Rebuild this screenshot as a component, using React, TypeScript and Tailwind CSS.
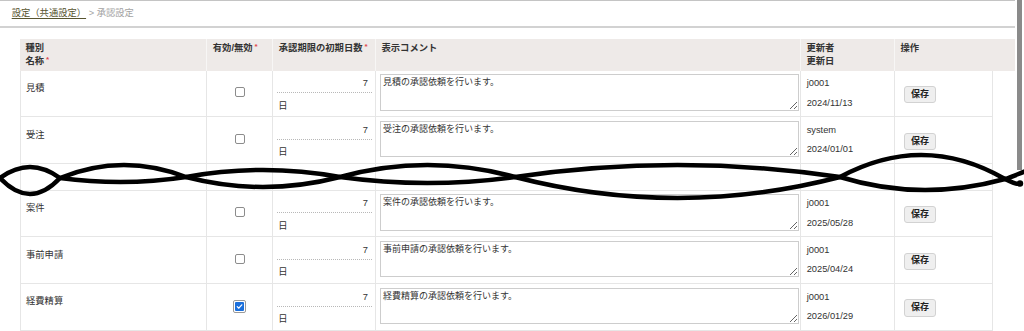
import React from "react";

const FONT = { fontFamily: '"Liberation Sans", "Noto Sans CJK JP", sans-serif' };

type Row = { name: string; checked: boolean; user: string; date: string };

const rowsTop: Row[] = [
  { name: "見積", checked: false, user: "j0001", date: "2024/11/13" },
  { name: "受注", checked: false, user: "system", date: "2024/01/01" },
];
const rowsBottom: Row[] = [
  { name: "案件", checked: false, user: "j0001", date: "2025/05/28" },
  { name: "事前申請", checked: false, user: "j0001", date: "2025/04/24" },
  { name: "経費精算", checked: true, user: "j0001", date: "2026/01/29" },
];

const GRID = "grid grid-cols-[187.3px_66px_102.7px_425px_94px_97.7px]";

function Req() {
  return <span className="relative top-[-2px] ml-[2px] text-[8px] text-[#e0474c]">*</span>;
}

function Checkbox({ checked }: { checked: boolean }) {
  if (checked) {
    return (
      <span className="flex h-[13px] w-[13px] items-center justify-center rounded-[2px] border border-[#9a9a9a] bg-white">
        <span className="flex h-[9px] w-[9px] items-center justify-center rounded-[1px] bg-[#1a6fdc]">
          <svg width="7" height="7" viewBox="0 0 10 10">
            <path d="M1.8 5.2 L4 7.4 L8.3 2.6" fill="none" stroke="#fff" strokeWidth="1.8" strokeLinecap="round" strokeLinejoin="round" />
          </svg>
        </span>
      </span>
    );
  }
  return <span className="block h-[10px] w-[10px] rounded-[2px] border border-[#8c8c8c] bg-white" />;
}

function DataRow({ r }: { r: Row }) {
  const cell = "border-r border-b border-[#e6e6e6] h-[46.7px]";
  return (
    <div className={GRID}>
      <div className={`${cell} border-l pl-[5px] pt-[10.5px] leading-[14px]`}>{r.name}</div>
      <div className={`${cell} flex justify-center pt-[16.5px]`}>
        <Checkbox checked={r.checked} />
      </div>
      <div className={`${cell} pl-[3.4px] pr-[3px] pt-[3.6px]`}>
        <div className="flex h-[19px] items-center justify-end border-b border-dotted border-[#b8b8b8] pr-[4px] leading-[14px]">
          7
        </div>
        <div className="mt-[5.5px] pl-[1.5px] leading-[14px]">日</div>
      </div>
      <div className={`${cell} pl-[4px] pt-[3.6px]`}>
        <textarea
          readOnly
          defaultValue={`${r.name}の承認依頼を行います。`}
          style={FONT}
          className="block h-[36.4px] w-[419px] border border-[#cdcdcd] bg-white px-[2px] py-[1px] text-[9px] leading-[12px] text-[#333] outline-none"
        />
      </div>
      <div className={`${cell} pl-[5.7px]`}>
        <div className="pt-[6.6px] leading-[12px]">{r.user}</div>
        <div className="mt-[7.4px] leading-[12px]">{r.date}</div>
      </div>
      <div className={`${cell} pl-[9.3px] pt-[15.3px]`}>
        <div className="flex h-[17.3px] w-[31.7px] items-center justify-center rounded-[3px] border border-[#d2d2d2] bg-[#efefef] text-[9px] font-bold text-[#222]">
          保存
        </div>
      </div>
    </div>
  );
}

function SpacerRow() {
  const cell = "border-r border-b border-[#e6e6e6] h-[26.5px]";
  return (
    <div className={GRID}>
      <div className={`${cell} border-l`} />
      <div className={cell} />
      <div className={cell} />
      <div className={cell} />
      <div className={cell} />
      <div className={cell} />
    </div>
  );
}

function Header() {
  const cell = "border-r border-[#f7f6f5] h-[31.4px] pl-[5.5px] pt-[2.7px] leading-[12.7px] font-bold";
  return (
    <div className={`${GRID} bg-[#eeeae8] text-[#333]`}>
      <div className={cell}>
        <div>種別</div>
        <div>
          名称
          <Req />
        </div>
      </div>
      <div className={cell}>
        有効/無効
        <Req />
      </div>
      <div className={cell}>
        承認期限の初期日数
        <Req />
      </div>
      <div className={cell}>表示コメント</div>
      <div className={cell}>
        <div>更新者</div>
        <div>更新日</div>
      </div>
      <div className={`${cell} border-r-0`}>操作</div>
    </div>
  );
}

function Wave() {
  const p1 =
    "M0,178 C20,163.3 40,163.3 60,178 C102,183.5 144,183.5 186,177 C237.3,167.7 288.7,167.7 340,177 C398.3,185 456.7,185 515,177 C623.3,161 731.7,161 840,177 C895,194 950,194 1005,179 C1012,177 1018,174 1026,171";
  const p2 =
    "M0,178 C20,199.3 40,199.3 60,178 C102,160.8 144,160.8 186,177 C237.3,190.3 288.7,190.3 340,177 C398.3,161 456.7,161 515,177 C623.3,205 731.7,205 840,177 C895,147.3 950,147.3 1005,179 C1011,182 1015,184 1019,184";
  return (
    <svg className="pointer-events-none absolute left-0 top-0" width="1024" height="331" viewBox="0 0 1024 331">
      <path d={p1} fill="none" stroke="#000" strokeWidth="4.5" strokeLinecap="round" />
      <path d={p2} fill="none" stroke="#000" strokeWidth="4.5" strokeLinecap="round" />
      <circle cx="1020" cy="183.5" r="3.2" fill="#000" />
    </svg>
  );
}

export default function App() {
  return (
    <div className="relative h-[331px] w-[1024px] overflow-hidden bg-white text-[9.3px] text-[#333]" style={FONT}>
      <div className="flex">
        <div className="w-[1015px]">
          <div className="flex h-[28px] items-center border-t-[1.5px] border-b-2 border-t-[#c4c4c4] border-b-[#d2d2d2] pl-[11.7px]">
            <span className="text-[#57542f] underline underline-offset-[2px]">設定（共通設定）</span>
            <span className="text-[#a3a3a3]">&nbsp;&gt;&nbsp;</span>
            <span className="text-[#a3a3a3]">承認設定</span>
          </div>
          <div className="pl-[20px] pt-[11.3px]">
            <Header />
            {rowsTop.map((r) => (
              <DataRow key={r.name} r={r} />
            ))}
            <SpacerRow />
            {rowsBottom.map((r) => (
              <DataRow key={r.name} r={r} />
            ))}
          </div>
        </div>
        <div className="w-[9px] pl-[1.7px]">
          <div className="h-[170px] w-[5.6px] bg-[#8a8a8a]" />
        </div>
      </div>
      <Wave />
    </div>
  );
}
